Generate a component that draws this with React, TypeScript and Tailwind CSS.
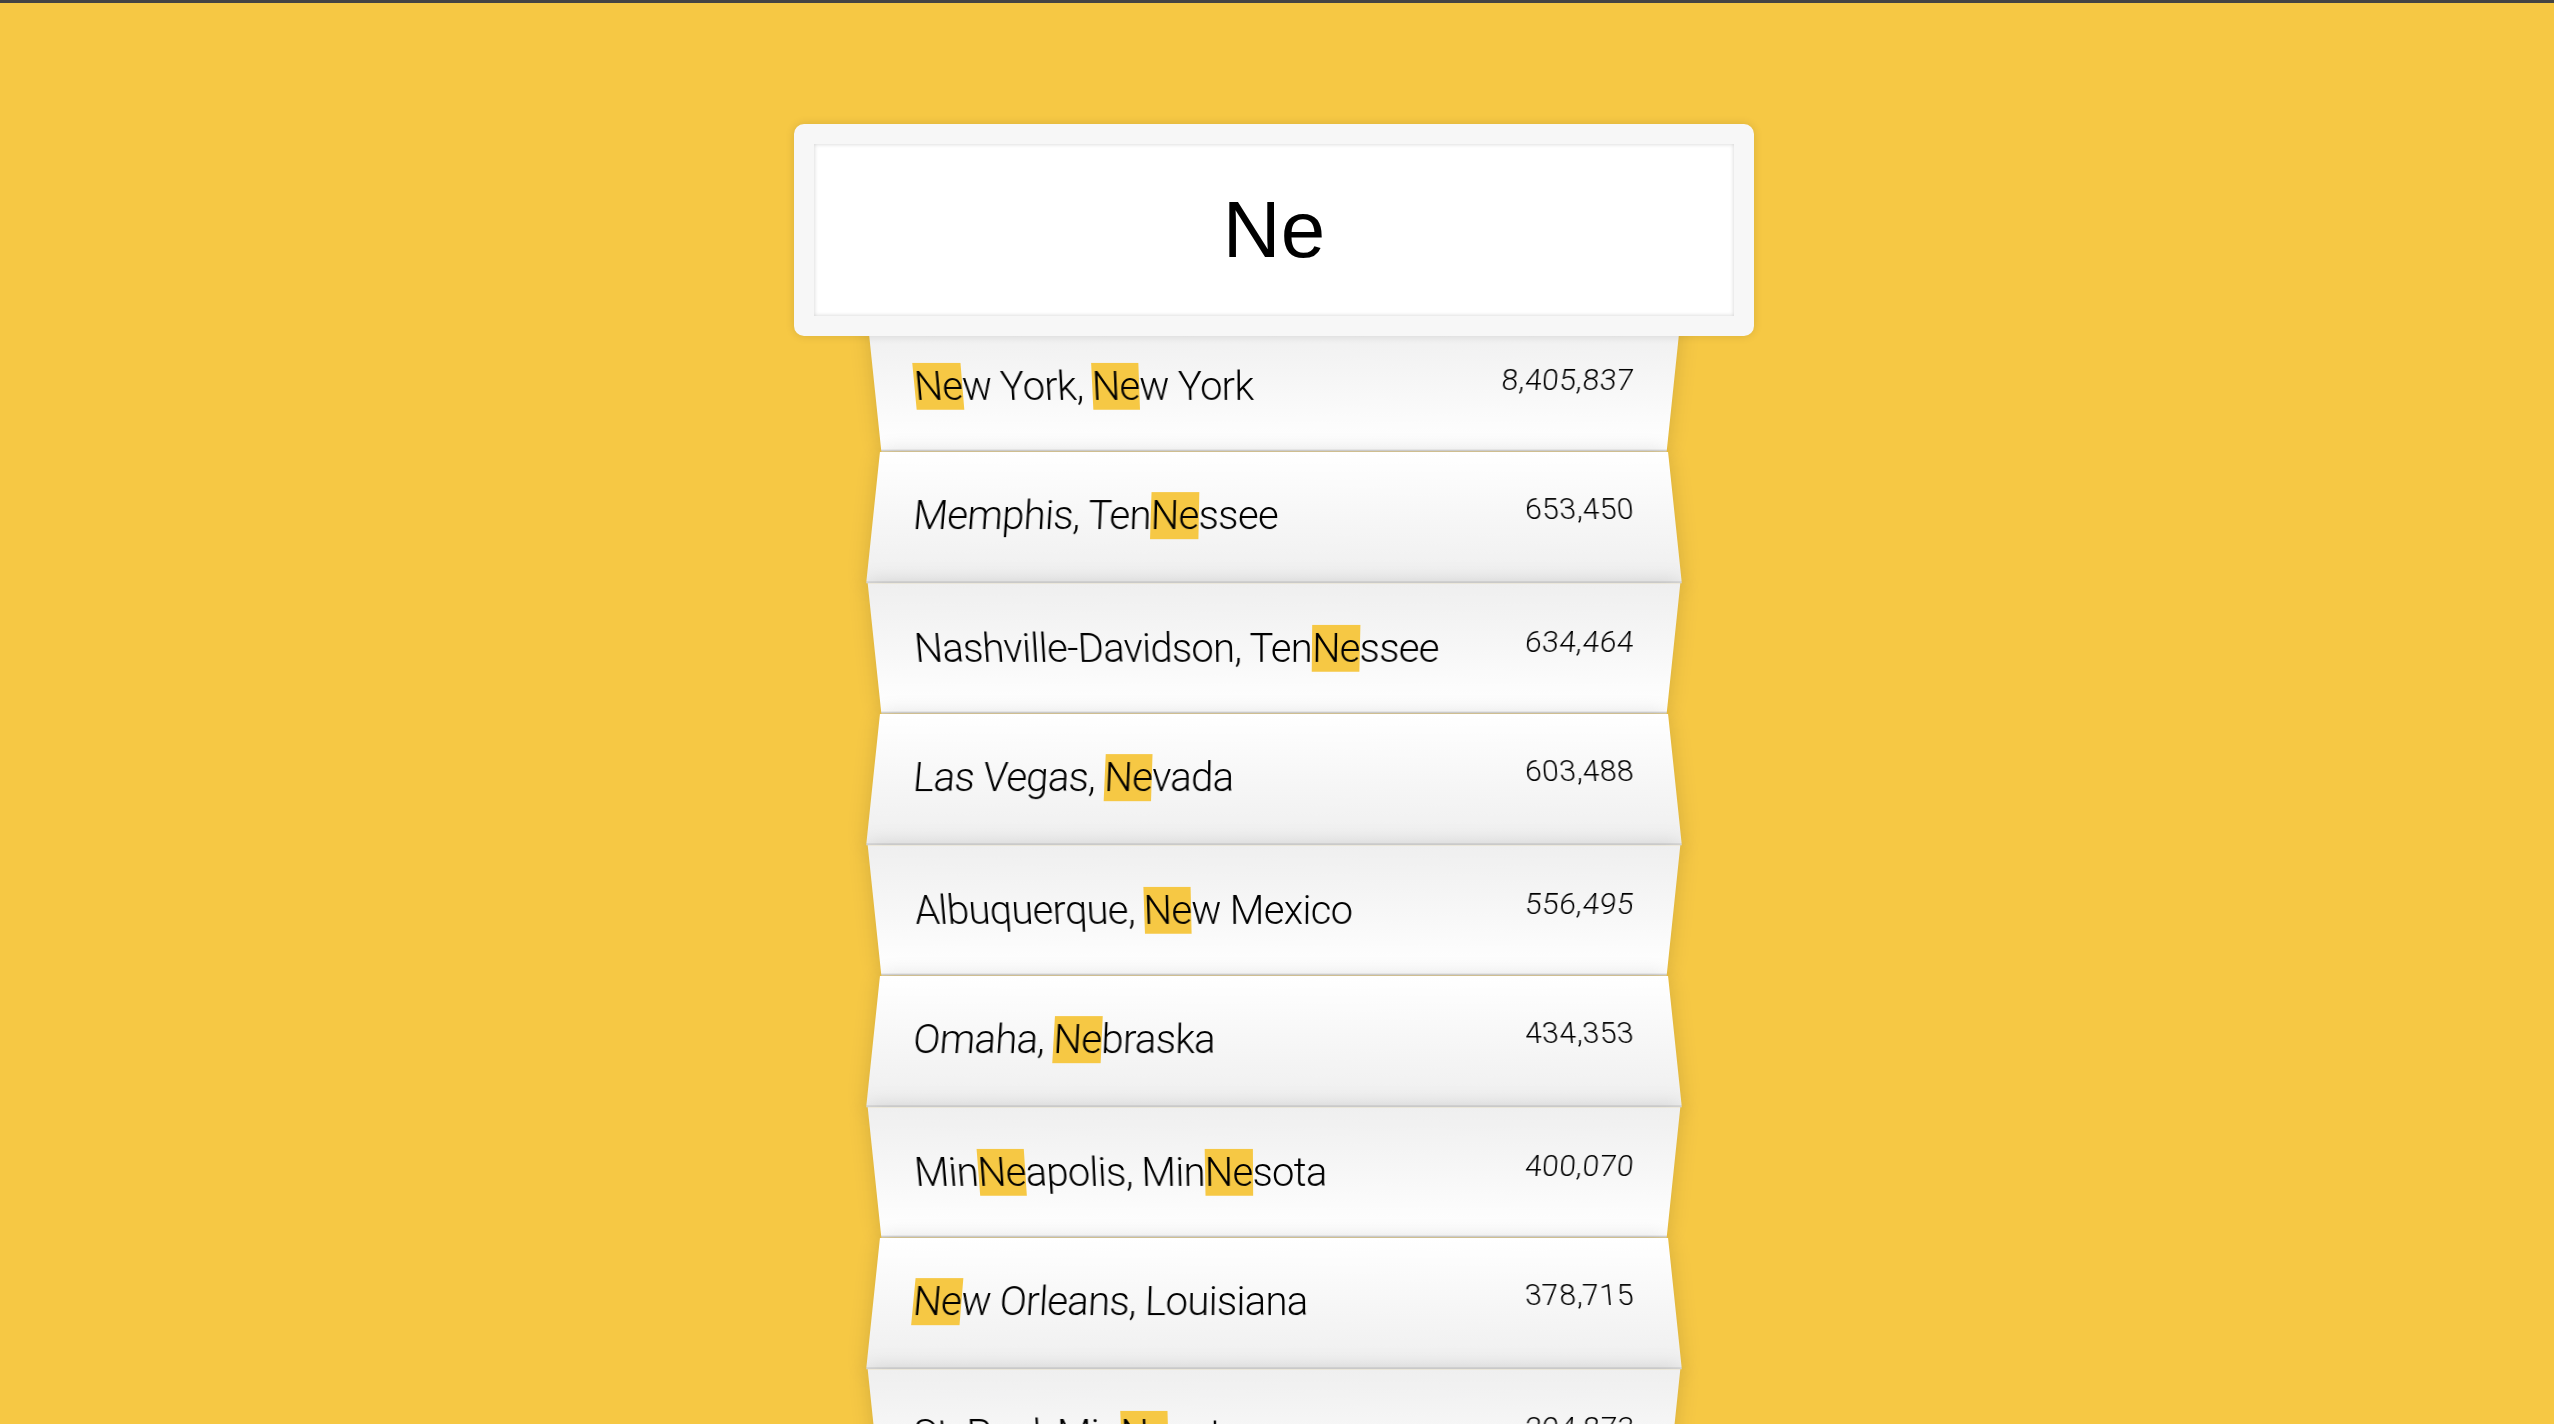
import React from "react";

type City = { parts: (string | { hl: string })[]; pop: string };

const H = (s: string) => ({ hl: s });

const cities: City[] = [
  { parts: [H("Ne"), "w York, ", H("Ne"), "w York"], pop: "8,405,837" },
  { parts: ["Memphis, Ten", H("Ne"), "ssee"], pop: "653,450" },
  { parts: ["Nashville-Davidson, Ten", H("Ne"), "ssee"], pop: "634,464" },
  { parts: ["Las Vegas, ", H("Ne"), "vada"], pop: "603,488" },
  { parts: ["Albuquerque, ", H("Ne"), "w Mexico"], pop: "556,495" },
  { parts: ["Omaha, ", H("Ne"), "braska"], pop: "434,353" },
  { parts: ["Min", H("Ne"), "apolis, Min", H("Ne"), "sota"], pop: "400,070" },
  { parts: [H("Ne"), "w Orleans, Louisiana"], pop: "378,715" },
  { parts: ["St. Paul, Min", H("Ne"), "sota"], pop: "294,873" },
];

export default function App() {
  return (
    <div className="h-[1424px] overflow-hidden bg-[#f6c844] pr-[6px] font-['Helvetica_Neue',Roboto,sans-serif] text-black">
      <div className="mr-[-6px] h-[3px] bg-[#444444]" />
      <div className="mx-auto mt-[101px] w-[800px]">
        <input
          readOnly
          value="Ne"
          className="relative top-[20px] left-[-80px] z-[2] m-0 box-border w-[960px] rounded-[10px] border-[20px] border-solid border-[#f7f7f7] bg-white p-[40px] text-center font-['Liberation_Sans',Arial,sans-serif] text-[80px] font-normal leading-[normal] text-black shadow-[0_0_10px_rgba(0,0,0,0.12),inset_0_0_4px_rgba(0,0,0,0.19)] outline-none"
        />
        <ul className="relative m-0 list-none p-0">
          {cities.map((c, i) => {
            const odd = i % 2 === 0;
            return (
              <li
                key={i}
                className={
                  odd
                    ? "m-0 flex justify-between border-b-[2px] border-solid border-[#d8d8d8] bg-linear-to-t from-white to-[#efefef] p-[40px] text-[40px] leading-[49px] font-light tracking-[-0.7px] shadow-[0_0_20px_rgba(0,0,0,0.14)] [transform:perspective(200px)_rotateX(-3deg)_translateY(6px)]"
                    : "m-0 flex justify-between border-b-[2px] border-solid border-[#d8d8d8] bg-linear-to-b from-white to-[#efefef] p-[40px] text-[40px] leading-[49px] font-light tracking-[-0.7px] shadow-[0_0_20px_rgba(0,0,0,0.14)] [transform:perspective(200px)_rotateX(3deg)_translateY(4px)_scale(1.001)]"
                }
              >
                <span className="whitespace-pre">
                  {c.parts.map((p, j) =>
                    typeof p === "string" ? (
                      <React.Fragment key={j}>{p}</React.Fragment>
                    ) : (
                      <span key={j} className="bg-[#f6c844]">
                        {p.hl}
                      </span>
                    )
                  )}
                </span>
                <span className="text-[30px] leading-[36px] tracking-[0.5px]">{c.pop}</span>
              </li>
            );
          })}
        </ul>
      </div>
    </div>
  );
}
